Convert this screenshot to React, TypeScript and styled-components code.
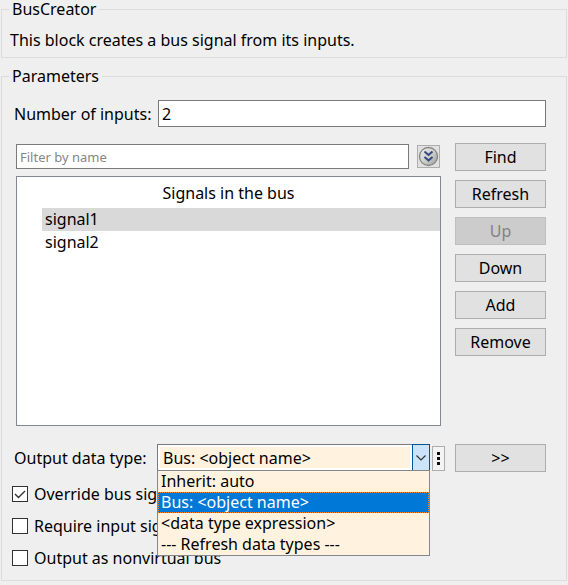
import React, { useState } from "react";
import styled, { createGlobalStyle } from "styled-components";

const GlobalStyle = createGlobalStyle`
  * { box-sizing: border-box; }
  body {
    margin: 0;
    background: #efefef;
    color: #000;
    font-family: Tahoma, "Noto Sans", "DejaVu Sans", sans-serif;
    font-size: 16px;
    line-height: 20px;
  }
  button, input, select { font: inherit; color: inherit; margin: 0; border-radius: 0; }
`;

const Dialog = styled.main`
  display: flex;
  flex-direction: column;
  gap: 9px;
  padding: 0 1px 4px;
`;

const Group = styled.fieldset`
  min-width: 0;
  margin: 0;
  padding: 0;
  border: 1px solid #dcdcdc;
`;

const GroupTitle = styled.legend`
  margin-left: 7px;
  padding: 0 3px;
  line-height: 19px;
`;

const Description = styled.p`
  margin: 0;
  padding: 11px 8px 7px;
`;

const Fields = styled.div`
  display: flex;
  flex-direction: column;
  padding: 14px 20px 12px 10px;
`;

const InputsRow = styled.div`
  display: grid;
  grid-template-columns: 144px 1fr;
  align-items: center;
  padding-left: 2px;
`;

const TextBox = styled.input`
  min-width: 0;
  width: 100%;
  height: 27px;
  padding: 0 3px;
  border: 1px solid #7a7a7a;
  background: #fff;
  outline: none;
`;

const FilterBox = styled(TextBox)`
  height: 25px;
  font-size: 13px;
  &::placeholder { color: #858585; opacity: 1; }
`;

const BusEditor = styled.div`
  display: grid;
  grid-template-columns: 1fr 91px;
  gap: 14px;
  padding: 16px 0 0 4px;
`;

const SignalPane = styled.div`
  display: flex;
  flex-direction: column;
  gap: 7px;
  padding-top: 1px;
`;

const FilterRow = styled.div`
  display: grid;
  grid-template-columns: 1fr 23px;
  gap: 8px;
  align-items: center;
  padding-right: 1px;
`;

const ExpandButton = styled.button`
  display: grid;
  place-items: center;
  height: 23px;
  padding: 0;
  border: 1px solid #adadad;
  background: #e1e1e1;
`;

const SignalTree = styled.section`
  height: 250px;
  padding-top: 6px;
  border: 1px solid #828790;
  background: #fff;
`;

const TreeTitle = styled.h2`
  margin: 0 0 5px;
  font-size: 16px;
  font-weight: 400;
  text-align: center;
`;

const SignalList = styled.ul`
  margin: 0;
  padding: 0 0 0 25px;
  list-style: none;
`;

const Signal = styled.li<{ $selected: boolean }>`
  padding-left: 3px;
  line-height: 23px;
  background: ${(p) => (p.$selected ? "#d9d9d9" : "transparent")};
`;

const ButtonColumn = styled.div`
  display: flex;
  flex-direction: column;
  gap: 9px;
`;

const PushButton = styled.button`
  height: 28px;
  padding: 0;
  border: 1px solid #adadad;
  background: #e1e1e1;
  &:disabled {
    border-color: #bfbfbf;
    background: #cccccc;
    color: #838383;
  }
`;

const TypeRow = styled.div`
  display: grid;
  grid-template-columns: 143px 1fr 13px 101px;
  align-items: center;
  padding: 18px 0 0 2px;
`;

const Combo = styled.div`
  position: relative;
  display: grid;
  grid-template-columns: 1fr 18px;
  align-self: start;
  height: 27px;
  margin-right: 2px;
`;

const ComboSelect = styled.select`
  appearance: none;
  min-width: 0;
  padding: 0 5px;
  border: 1px solid #7a7a7a;
  border-right: 0;
  background: #fff3e0;
  box-shadow: inset 0 0 0 2px #fff;
  outline: none;
`;

const ComboArrow = styled.button`
  display: grid;
  place-items: center;
  padding: 0;
  border: 1px solid #005499;
  border-bottom-color: #7a7a7a;
  background: #cce4f7;
`;

const Popup = styled.ul`
  position: absolute;
  z-index: 1;
  top: 26px;
  left: 0;
  right: 0;
  margin: 0;
  padding: 0;
  border: 1px solid #828790;
  background: #fff3e0;
  list-style: none;
`;

const Option = styled.li<{ $active: boolean }>`
  height: 21px;
  padding-left: 2px;
  border: 1px ${(p) => (p.$active ? "dotted #ff8728" : "solid transparent")};
  line-height: 19px;
  background: ${(p) => (p.$active ? "#0078d7" : "transparent")};
  color: ${(p) => (p.$active ? "#fff" : "#000")};
`;

const MoreButton = styled.button`
  display: grid;
  place-items: center;
  height: 25px;
  padding: 0;
  border: 1px solid #adadad;
  background: #f4f4f4;
`;

const AssistantButton = styled(PushButton)`
  margin-left: 10px;
`;

const Checks = styled.div`
  display: flex;
  flex-direction: column;
  align-items: flex-start;
  gap: 12px;
  padding-top: 12px;
`;

const CheckLabel = styled.label`
  display: flex;
  align-items: center;
  gap: 6px;
`;

const CheckBox = styled.span`
  display: grid;
  width: 16px;
  height: 16px;
  > * { grid-area: 1 / 1; }
  svg { pointer-events: none; }
  input:not(:checked) + svg { visibility: hidden; }
`;

const CheckInput = styled.input`
  appearance: none;
  width: 16px;
  height: 16px;
  border: 1px solid #333;
  background: #fff;
`;

function Check({ label, initial = false }: { label: string; initial?: boolean }) {
  const [on, setOn] = useState(initial);
  return (
    <CheckLabel>
      <CheckBox>
        <CheckInput type="checkbox" checked={on} onChange={() => setOn(!on)} />
        <svg width="16" height="16" viewBox="0 0 16 16" fill="none" stroke="#333" strokeWidth="1.4">
          <path d="M3 8l3.5 3.5L13 5" />
        </svg>
      </CheckBox>
      {label}
    </CheckLabel>
  );
}

function ExpandIcon() {
  return (
    <svg width="21" height="21" viewBox="0 0 21 21" fill="none">
      <defs>
        <linearGradient id="disc" x1="0" y1="0" x2="1" y2="1">
          <stop offset="0" stopColor="#f2f2f0" />
          <stop offset="0.5" stopColor="#cfcfcd" />
          <stop offset="1" stopColor="#9c9c9a" />
        </linearGradient>
      </defs>
      <circle cx="10.5" cy="10.5" r="9" fill="url(#disc)" stroke="#858583" strokeWidth="1.3" />
      <path d="M6.5 5.5l4 3.5 4-3.5M6.5 11l4 3.5 4-3.5" stroke="#34487f" strokeWidth="2" />
    </svg>
  );
}

const signals = ["signal1", "signal2"];
const dataTypes = [
  "Inherit: auto",
  "Bus: <object name>",
  "<data type expression>",
  "--- Refresh data types ---",
];

export default function App() {
  const [selected, setSelected] = useState(signals[0]);
  const [dataType, setDataType] = useState(dataTypes[1]);
  const [open, setOpen] = useState(true);

  return (
    <>
      <GlobalStyle />
      <Dialog>
        <Group>
          <GroupTitle>BusCreator</GroupTitle>
          <Description>This block creates a bus signal from its inputs.</Description>
        </Group>
        <Group>
          <GroupTitle>Parameters</GroupTitle>
          <Fields>
            <InputsRow>
              <label htmlFor="inputs">Number of inputs:</label>
              <TextBox id="inputs" defaultValue="2" />
            </InputsRow>
            <BusEditor>
              <SignalPane>
                <FilterRow>
                  <FilterBox aria-label="Filter by name" placeholder="Filter by name" />
                  <ExpandButton type="button" aria-label="Filter options">
                    <ExpandIcon />
                  </ExpandButton>
                </FilterRow>
                <SignalTree>
                  <TreeTitle>Signals in the bus</TreeTitle>
                  <SignalList>
                    {signals.map((s) => (
                      <Signal key={s} $selected={s === selected} onClick={() => setSelected(s)}>
                        {s}
                      </Signal>
                    ))}
                  </SignalList>
                </SignalTree>
              </SignalPane>
              <ButtonColumn>
                <PushButton type="button">Find</PushButton>
                <PushButton type="button">Refresh</PushButton>
                <PushButton type="button" disabled>Up</PushButton>
                <PushButton type="button">Down</PushButton>
                <PushButton type="button">Add</PushButton>
                <PushButton type="button">Remove</PushButton>
              </ButtonColumn>
            </BusEditor>
            <TypeRow>
              <label htmlFor="datatype">Output data type:</label>
              <Combo>
                <ComboSelect
                  id="datatype"
                  value={dataType}
                  onChange={(e) => setDataType(e.target.value)}
                >
                  {dataTypes.map((t) => (
                    <option key={t}>{t}</option>
                  ))}
                </ComboSelect>
                <ComboArrow type="button" aria-label="Show data types" onClick={() => setOpen(!open)}>
                  <svg width="12" height="8" viewBox="0 0 12 8" fill="none" stroke="#333" strokeWidth="1.2">
                    <path d="M1.5 1.5L6 6l4.5-4.5" />
                  </svg>
                </ComboArrow>
                {open && (
                  <Popup role="listbox" aria-label="Data types">
                    {dataTypes.map((t) => (
                      <Option
                        key={t}
                        role="option"
                        aria-selected={t === dataType}
                        $active={t === dataType}
                        onClick={() => setDataType(t)}
                      >
                        {t}
                      </Option>
                    ))}
                  </Popup>
                )}
              </Combo>
              <MoreButton type="button" aria-label="More actions">
                <svg width="3" height="13" viewBox="0 0 3 13" fill="#111">
                  <path d="M0 0h3v3H0zM0 5h3v3H0zM0 10h3v3H0z" />
                </svg>
              </MoreButton>
              <AssistantButton type="button">&gt;&gt;</AssistantButton>
            </TypeRow>
            <Checks>
              <Check label="Override bus signal names" initial />
              <Check label="Require input signal names" />
              <Check label="Output as nonvirtual bus" />
            </Checks>
          </Fields>
        </Group>
      </Dialog>
    </>
  );
}
